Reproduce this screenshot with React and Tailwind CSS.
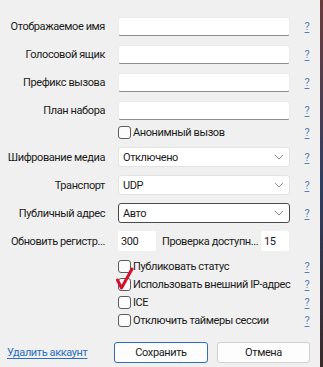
import React from "react";

const font = { fontFamily: 'Roboto, "Noto Sans", sans-serif' };

function Help() {
  return (
    <span className="w-[30px] pl-[4px] text-center text-[11px] leading-none text-[#5b7fb5] underline underline-offset-2">?</span>
  );
}

function Label({ children }) {
  return (
    <div className="w-[105px] shrink-0 text-right whitespace-nowrap">{children}</div>
  );
}

function TextRow({ label, mt }) {
  return (
    <div className={`flex items-center h-[19px] ${mt}`}>
      <Label>{label}</Label>
      <div className="ml-[13px] w-[172px] h-[19px] bg-white border border-[#ececec] border-b-[#8c8c8c] rounded-[3px]" />
      <Help />
    </div>
  );
}

function Chevron() {
  return (
    <svg width="10" height="6" viewBox="0 0 10 6" className="mr-[5px]">
      <path d="M1 1l4 4 4-4" fill="none" stroke="#8a8a8a" strokeWidth="1" />
    </svg>
  );
}

function SelectRow({ label, value, focused, mt }) {
  return (
    <div className={`flex items-center h-[20px] ${mt}`}>
      <Label>{label}</Label>
      <div
        className={`ml-[13px] w-[172px] h-[20px] bg-white rounded-[3px] flex items-center justify-between pl-[4px] ${
          focused ? "border border-[#4a4a4a]" : "border border-[#e3e3e3]"
        }`}
      >
        <span>{value}</span>
        <Chevron />
      </div>
      <Help />
    </div>
  );
}

function Box() {
  return <span className="w-[13px] h-[13px] shrink-0 rounded-[3px] border border-[#5c5c5c] bg-[#fbfbfb]" />;
}

function CheckRow({ label, mt, checked }) {
  return (
    <div className={`flex items-center h-[17px] ${mt}`}>
      <div className="w-[118px] shrink-0" />
      <div className="relative w-[172px] flex items-center gap-[2px]">
        <Box />
        <span className="whitespace-nowrap">{label}</span>
        {checked && (
          <svg className="absolute left-[-2px] top-[-12px]" width="20" height="26" viewBox="0 0 20 26">
            <path d="M1.5 14 L5.5 22 L16 3" fill="none" stroke="#d3112b" strokeWidth="3" strokeLinecap="round" strokeLinejoin="round" />
          </svg>
        )}
      </div>
      <Help />
    </div>
  );
}

export default function App() {
  return (
    <div className="flex w-[323px] h-[367px] overflow-hidden" style={font}>
      <div className="w-[320px] h-full bg-[#f0f0f0] text-[11px] tracking-[-0.4px] leading-none text-[#1b1b1b] pt-[17px] flex flex-col">
        <TextRow label="Отображаемое имя" mt="" />
        <TextRow label="Голосовой ящик" mt="mt-[9px]" />
        <TextRow label="Префикс вызова" mt="mt-[9px]" />
        <TextRow label="План набора" mt="mt-[9px]" />
        <CheckRow label="Анонимный вызов" mt="mt-[4px]" />
        <SelectRow label="Шифрование медиа" value="Отключено" mt="mt-[6px]" />
        <SelectRow label="Транспорт" value="UDP" mt="mt-[8px]" />
        <SelectRow label="Публичный адрес" value="Авто" focused mt="mt-[8px]" />

        <div className="flex items-center h-[20px] mt-[8px]">
          <div className="w-[105px] shrink-0 text-right whitespace-nowrap">Обновить регистр...</div>
          <div className="ml-[13px] w-[38px] h-[20px] bg-white flex items-center pl-[3px] rounded-[2px]">300</div>
          <span className="ml-[6px] w-[99px] whitespace-nowrap">Проверка доступн...</span>
          <div className="w-[28px] h-[20px] bg-white flex items-center pl-[3px] rounded-[2px]">15</div>
        </div>

        <CheckRow label="Публиковать статус" mt="mt-[7px]" />
        <CheckRow label="Использовать внешний IP-адрес" checked mt="mt-[1px]" />
        <CheckRow label="ICE" mt="mt-[1px]" />
        <CheckRow label="Отключить таймеры сессии" mt="mt-[1px]" />

        <div className="flex items-center h-[21px] mt-[13px]">
          <a className="ml-[7px] w-[107px] text-[#2a6fc0] underline underline-offset-2 whitespace-nowrap">Удалить аккаунт</a>
          <button className="w-[94px] h-[21px] bg-[#fdfdfd] border border-[#2f6fb5] rounded-[3px] text-[#1b1b1b]">Сохранить</button>
          <button className="ml-[9px] w-[93px] h-[21px] bg-[#fdfdfd] border border-[#d0d0d0] rounded-[3px] text-[#1b1b1b]">Отмена</button>
        </div>
      </div>
      <div className="flex-1 h-full bg-gradient-to-b from-[#6b3a3a] via-[#2e3d60] to-[#3a2a2a]" />
    </div>
  );
}
